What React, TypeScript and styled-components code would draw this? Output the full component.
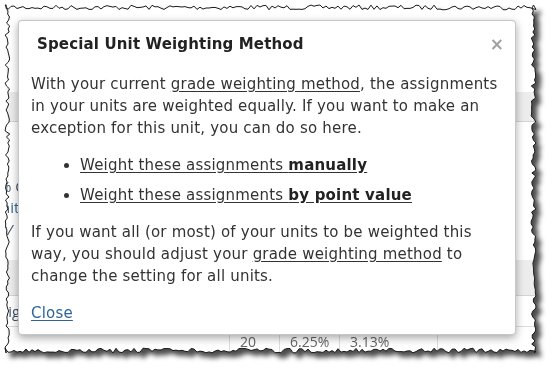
import styled, { createGlobalStyle } from 'styled-components';

const CAPTURE_W = 531;
const CAPTURE_H = 348;

const GlobalStyle = createGlobalStyle`
  html, body {
    margin: 0;
    padding: 0;
    background: #ffffff;
  }
`;

// jagged "torn paper" outline, seeded so it is the same every run
const makeTornEdge = () => {
  let seed = 7;
  const rnd = () => {
    seed = (seed * 16807) % 2147483647;
    return (seed - 1) / 2147483646;
  };
  const amp = 2.4;
  const pts: [number, number][] = [];
  const jig = () => (rnd() - 0.5) * 2 * amp;

  for (let x = 0; x <= CAPTURE_W; x += 3) pts.push([x, amp + jig()]);
  for (let y = 0; y <= CAPTURE_H; y += 3) pts.push([CAPTURE_W - amp + jig(), y]);
  for (let x = CAPTURE_W; x >= 0; x -= 3) pts.push([x, CAPTURE_H - amp + jig()]);
  for (let y = CAPTURE_H; y >= 0; y -= 3) pts.push([amp + jig(), y]);

  return pts.map(([x, y]) => [Math.round(x * 10) / 10, Math.round(y * 10) / 10] as [number, number]);
};

const EDGE = makeTornEdge();
const CLIP = `polygon(${EDGE.map(([x, y]) => `${x}px ${y}px`).join(', ')})`;
const OUTLINE = EDGE.map(([x, y]) => `${x},${y}`).join(' ');

const App = () => {
  return (
    <>
      <GlobalStyle />
      <Frame>
        <ShadowWrap>
          <Capture style={{ clipPath: CLIP }}>
            <BackgroundPage>
              <Band $height={29} />
              <FragmentArea>
                <Fragment $top={55} $shift={-6}>% C</Fragment>
                <Fragment $top={3} $tone="#3d6790">nit</Fragment>
                <Fragment $top={4} $italic>s/</Fragment>
              </FragmentArea>
              <Band $height={35} />
              <SigRow>
                <Fragment $top={0}>sig</Fragment>
              </SigRow>
              <TableRow>
                <Cell $width={50}>20</Cell>
                <Cell $width={60}>6.25%</Cell>
                <Cell $width={99}>3.13%</Cell>
              </TableRow>
            </BackgroundPage>

            <Modal>
              <Header>
                <Title>Special Unit Weighting Method</Title>
                <CloseIcon>×</CloseIcon>
              </Header>
              <Body>
                <Paragraph>
                  With your current <TextLink>grade weighting method</TextLink>, the assignments
                  <br />
                  in your units are weighted equally. If you want to make an
                  <br />
                  exception for this unit, you can do so here.
                </Paragraph>
                <OptionList>
                  <Option>
                    <TextLink>
                      Weight these assignments <strong>manually</strong>
                    </TextLink>
                  </Option>
                  <Option>
                    <TextLink>
                      Weight these assignments <strong>by point value</strong>
                    </TextLink>
                  </Option>
                </OptionList>
                <Paragraph>
                  If you want all (or most) of your units to be weighted this
                  <br />
                  way, you should adjust your <TextLink>grade weighting method</TextLink> to
                  <br />
                  change the setting for all units.
                </Paragraph>
                <CloseLink>Close</CloseLink>
              </Body>
            </Modal>
          </Capture>
          <Outline viewBox={`0 0 ${CAPTURE_W} ${CAPTURE_H}`}>
            <polygon points={OUTLINE} fill="none" stroke="#1a1a1a" strokeWidth="1" />
          </Outline>
        </ShadowWrap>
      </Frame>
    </>
  );
};

const Frame = styled.div`
  width: 555px;
  height: 375px;
  padding: 5px 0 0 5px;
  box-sizing: border-box;
  background: #ffffff;
  overflow: hidden;
`;

const ShadowWrap = styled.div`
  position: relative;
  width: ${CAPTURE_W}px;
  height: ${CAPTURE_H}px;
  filter: drop-shadow(5px 5px 2.5px rgba(0, 0, 0, 0.7));
`;

const Capture = styled.div`
  position: relative;
  width: 100%;
  height: 100%;
  background: #ffffff;
  overflow: hidden;
`;

const Outline = styled.svg`
  position: absolute;
  inset: 0;
  width: 100%;
  height: 100%;
  overflow: visible;
`;

const BackgroundPage = styled.div`
  display: flex;
  flex-direction: column;
  padding-top: 87px;
  font-family: 'Open Sans', 'DejaVu Sans', sans-serif;
  font-size: 15px;
  color: #555555;
`;

const Band = styled.div<{ $height: number }>`
  height: ${({ $height }) => $height}px;
  background: #ececec;
  border-bottom: 1px solid #d4d4d4;
`;

const FragmentArea = styled.div`
  display: flex;
  flex-direction: column;
  height: 138px;
`;

const Fragment = styled.span<{ $top: number; $shift?: number; $tone?: string; $italic?: boolean }>`
  margin: ${({ $top, $shift }) => `${$top}px 0 0 ${$shift ?? -4}px`};
  line-height: 18px;
  white-space: nowrap;
  color: ${({ $tone }) => $tone ?? '#46566a'};
  font-style: ${({ $italic }) => ($italic ? 'italic' : 'normal')};
`;

const SigRow = styled.div`
  display: flex;
  align-items: center;
  height: 30px;
  border-bottom: 1px solid #dddddd;
`;

const TableRow = styled.div`
  display: flex;
  padding-left: 224px;
  height: 40px;
`;

const Cell = styled.div<{ $width: number }>`
  box-sizing: border-box;
  width: ${({ $width }) => $width}px;
  padding: 6px 0 0 10px;
  border-left: 1px solid #dddddd;
  font-size: 14px;
  color: #666666;
  line-height: 18px;

  &:last-child {
    border-right: 1px solid #dddddd;
  }
`;

const Modal = styled.div`
  position: absolute;
  left: 13px;
  top: 15px;
  width: 498px;
  height: 315px;
  box-sizing: border-box;
  background: #ffffff;
  border: 1px solid rgba(0, 0, 0, 0.22);
  border-radius: 4px;
  box-shadow: 0 3px 9px rgba(0, 0, 0, 0.35);
  font-family: 'DejaVu Sans', Verdana, sans-serif;
  color: #333333;
`;

const Header = styled.div`
  display: flex;
  justify-content: space-between;
  align-items: center;
  padding: 12px 11px 0 18px;
  height: 22px;
`;

const Title = styled.h3`
  margin: 0;
  font-size: 15px;
  font-weight: bold;
  letter-spacing: 0.15px;
  color: #222222;
  line-height: 22px;
`;

const CloseIcon = styled.span`
  font-size: 17px;
  font-weight: bold;
  color: #a0a0a0;
  line-height: 22px;
`;

const Body = styled.div`
  display: flex;
  flex-direction: column;
  gap: 15px;
  padding: 18px 12px 0 12px;
  font-size: 15px;
  letter-spacing: 0.2px;
  line-height: 22px;
`;

const Paragraph = styled.p`
  margin: 0;
  white-space: nowrap;
`;

const TextLink = styled.span`
  text-decoration: underline;
  text-underline-offset: 2px;
  color: #333333;

  strong {
    color: #222222;
  }
`;

const OptionList = styled.ul`
  display: flex;
  flex-direction: column;
  gap: 8px;
  margin: 0;
  padding-left: 49px;
  list-style: disc;
`;

const Option = styled.li`
  padding-left: 0;
`;

const CloseLink = styled.span`
  align-self: flex-start;
  color: #2f6499;
  text-decoration: underline;
  text-underline-offset: 2px;
`;

export default App;
